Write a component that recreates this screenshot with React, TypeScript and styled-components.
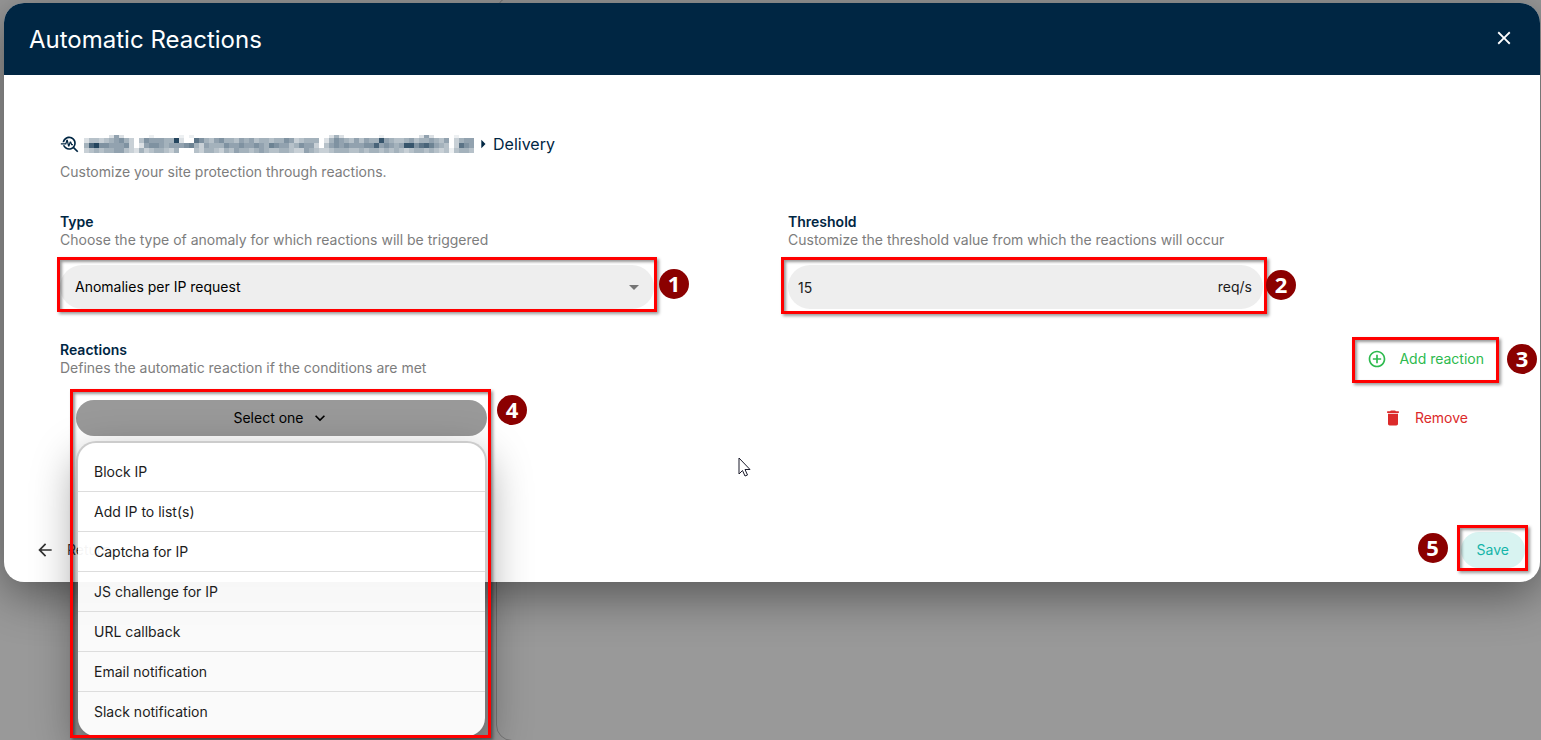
import React from "react";
import styled, { createGlobalStyle, css } from "styled-components";
import {
  MdAddCircleOutline,
  MdArrowBack,
  MdArrowDropDown,
  MdArrowRight,
  MdClose,
  MdDelete,
  MdKeyboardArrowDown,
  MdTroubleshoot,
} from "react-icons/md";

const navy = "#002643";
const grey = "#7d7d7d";

const GlobalStyle = createGlobalStyle`
  *, *::before, *::after { box-sizing: border-box; }
  body {
    margin: 0;
    background: #999;
    color: #1c1c1c;
    font-family: Inter, "Liberation Sans", sans-serif;
    font-size: 14px;
    line-height: 18px;
  }
  button, input, select { font: inherit; color: inherit; }
`;

const Page = styled.div`
  position: relative;
  min-height: 100vh;
  padding: 3px 1px 0 4px;
  overflow: hidden;
  background: #999;
`;

const BackPanel = styled.div`
  position: absolute;
  top: -4px;
  bottom: -1px;
  left: 496px;
  right: -20px;
  border: 1px solid #777;
  border-radius: 16px;
`;

const Dialog = styled.section`
  position: relative;
  background: #fff;
  border-radius: 20px;
  box-shadow: 0 12px 48px rgba(0, 0, 0, 0.46);
`;

const Header = styled.header`
  display: flex;
  align-items: center;
  justify-content: space-between;
  height: 72px;
  padding: 0 25px;
  background: ${navy};
  color: #fff;
  border-radius: 20px 20px 0 0;
`;

const Title = styled.h1`
  margin: 0;
  padding-top: 2px;
  font-size: 24px;
  line-height: 32px;
  font-weight: 400;
`;

const CloseButton = styled.button`
  display: flex;
  padding: 0 0 2px;
  border: 0;
  background: none;
  font-size: 22px;
`;

const Body = styled.div`
  padding: 57px 24px 0 56px;
`;

const Crumbs = styled.nav`
  display: flex;
  align-items: center;
  height: 24px;
  color: ${navy};
  font-size: 16px;
  svg { font-size: 20px; flex: none; }
`;

const CrumbLink = styled.a`
  display: flex;
  margin: 0 -1px 0 4px;
`;

const Hint = styled.p`
  margin: 0;
  color: ${grey};
`;

const Intro = styled(Hint)`
  margin-top: 7px;
`;

const Fields = styled.div`
  display: grid;
  grid-template-columns: 594fr 134fr 475fr 253fr;
  margin-top: 32px;
`;

const Field = styled.div<{ $column: number }>`
  grid-column: ${(p) => p.$column};
`;

const labelStyle = css`
  display: block;
  margin: 0;
  color: ${navy};
  font-size: 14px;
  line-height: 18px;
  font-weight: 600;
`;

const Label = styled.label`
  ${labelStyle}
`;

const SectionTitle = styled.h2`
  ${labelStyle}
`;

const Control = styled.div`
  position: relative;
  display: flex;
  align-items: center;
  height: 44px;
  margin-top: 16px;
  background: #eee;
  border-radius: 22px;
`;

const Select = styled.select`
  appearance: none;
  flex: 1;
  min-width: 0;
  height: 100%;
  padding: 0 15px;
  border: 0;
  background: none;
  color: #000;
`;

const SelectArrow = styled(MdArrowDropDown)`
  margin-right: 8px;
  color: #757575;
  font-size: 24px;
  pointer-events: none;
`;

const Input = styled.input`
  flex: 1;
  min-width: 0;
  height: 100%;
  padding: 0 10px;
  border: 0;
  background: none;
`;

const Unit = styled.span`
  padding-right: 11px;
`;

const Highlight = styled.span<{ $inset: string }>`
  position: absolute;
  inset: ${(p) => p.$inset};
  z-index: 3;
  border: 3px solid #f00;
  box-shadow: 2px 2px 3px rgba(0, 0, 0, 0.4), inset 2px 2px 3px rgba(0, 0, 0, 0.4);
  pointer-events: none;
`;

const Step = styled.span<{ $gap: number; $rise: number; $side?: "left" | "right" }>`
  position: absolute;
  top: calc(50% - 15px - ${(p) => p.$rise}px);
  ${(p) => (p.$side === "left" ? "right" : "left")}: calc(100% + ${(p) => p.$gap}px);
  z-index: 4;
  width: 30px;
  height: 30px;
  border-radius: 50%;
  background: #8b0000;
  color: #fff;
  font-family: "Open Sans", sans-serif;
  font-size: 22px;
  line-height: 28px;
  font-weight: 700;
  text-align: center;
`;

const Reactions = styled.div`
  display: flex;
  justify-content: space-between;
  margin-top: 32px;
`;

const IconButton = styled.button<{ $color: string }>`
  position: relative;
  display: flex;
  align-items: center;
  gap: 12px;
  height: 36px;
  padding: 0;
  border: 0;
  background: none;
  color: ${(p) => p.$color};
  svg { font-size: 20px; }
`;

const AddButton = styled(IconButton)`
  margin-right: 32px;
`;

const RemoveButton = styled(IconButton)`
  margin-right: 48px;
`;

const ReactionRow = styled.div`
  display: flex;
  justify-content: space-between;
  margin-top: 23px;
  padding-left: 16px;
`;

const Dropdown = styled.div`
  position: relative;
  width: 411px;
`;

const DropdownButton = styled.button`
  display: flex;
  align-items: center;
  justify-content: center;
  gap: 6px;
  width: 100%;
  height: 36px;
  padding: 0;
  border: 0;
  border-radius: 18px;
  background: #999;
  color: #000;
  svg { font-size: 20px; }
`;

const Menu = styled.ul`
  position: absolute;
  top: 41px;
  left: 0;
  right: 0;
  z-index: 2;
  margin: 0;
  padding: 9px 0 4px;
  list-style: none;
  border: 2px solid rgba(0, 0, 0, 0.2);
  border-radius: 20px;
  background: rgba(255, 255, 255, 0.95);
  background-clip: padding-box;
  box-shadow: 0 16px 44px rgba(0, 0, 0, 0.38);
`;

const MenuItem = styled.li`
  height: 40px;
  border-bottom: 1px solid #ddd;
  &:last-child { border-bottom-color: transparent; }
`;

const MenuButton = styled.button`
  width: 100%;
  height: 100%;
  padding: 0 16px;
  border: 0;
  background: none;
  text-align: left;
`;

const Footer = styled.footer`
  display: flex;
  align-items: center;
  justify-content: space-between;
  margin-top: 96px;
  padding: 0 15px 14px 31px;
`;

const SaveButton = styled.button`
  position: relative;
  height: 36px;
  padding: 0 16px;
  border: 0;
  border-radius: 18px;
  background: #d8f3f1;
  color: #14b5a9;
`;

const Pointer = styled.svg`
  position: absolute;
  top: 457px;
  left: 738px;
  z-index: 5;
`;

/* Darkness of each cell in the masked host name, 0 (white) to f (navy). */
const mask = [
  "000002620000010000010100000000000000000000000000025200000001000000026200001000",
  "244345675304766655c2009754675546564554557634555025765464655b654456455654603566",
  "5ac7766673026776566678536555766766765876645766304676766677a67656bb79a865403976",
  "345455664325345543500043554354655456544554336543345554454554545434554543414554",
];

function MaskedHost() {
  return (
    <svg width="390" height="18" viewBox="0 0 390 18" role="img" aria-label="Hidden host name" shapeRendering="crispEdges">
      {mask.flatMap((row, y) =>
        row.split("").map((v, x) => (
          <rect
            key={`${y}-${x}`}
            x={x * 5}
            y={y === 0 ? 0 : y * 5 - 2}
            width="5"
            height={y === 0 ? 3 : 5}
            fill={navy}
            opacity={parseInt(v, 16) / 14}
          />
        ))
      )}
    </svg>
  );
}

const reactions = [
  "Block IP",
  "Add IP to list(s)",
  "Captcha for IP",
  "JS challenge for IP",
  "URL callback",
  "Email notification",
  "Slack notification",
];

export default function App() {
  return (
    <Page>
      <GlobalStyle />
      <BackPanel />
      <Dialog role="dialog" aria-labelledby="dialog-title">
        <Header>
          <Title id="dialog-title">Automatic Reactions</Title>
          <CloseButton type="button" aria-label="Close">
            <MdClose />
          </CloseButton>
        </Header>
        <Body>
          <Crumbs aria-label="Breadcrumb">
            <MdTroubleshoot />
            <CrumbLink href="#site">
              <MaskedHost />
            </CrumbLink>
            <MdArrowRight />
            <span>Delivery</span>
          </Crumbs>
          <Intro>Customize your site protection through reactions.</Intro>

          <Fields>
            <Field $column={1}>
              <Label htmlFor="type">Type</Label>
              <Hint>Choose the type of anomaly for which reactions will be triggered</Hint>
              <Control>
                <Select id="type" defaultValue="ip">
                  <option value="ip">Anomalies per IP request</option>
                </Select>
                <SelectArrow />
                <Highlight $inset="-8px -3px -3px -3px" />
                <Step $gap={5} $rise={3}>1</Step>
              </Control>
            </Field>
            <Field $column={3}>
              <Label htmlFor="threshold">Threshold</Label>
              <Hint>Customize the threshold value from which the reactions will occur</Hint>
              <Control>
                <Input id="threshold" defaultValue="15" />
                <Unit>req/s</Unit>
                <Highlight $inset="-8px -4px -5px -7px" />
                <Step $gap={3} $rise={2}>2</Step>
              </Control>
            </Field>
          </Fields>

          <Reactions>
            <div>
              <SectionTitle>Reactions</SectionTitle>
              <Hint>Defines the automatic reaction if the conditions are met</Hint>
            </div>
            <AddButton type="button" $color="#2dba4e">
              <MdAddCircleOutline />
              Add reaction
              <Highlight $inset="-4px -15px -6px -15px" />
              <Step $gap={23} $rise={0}>3</Step>
            </AddButton>
          </Reactions>

          <ReactionRow>
            <Dropdown>
              <DropdownButton type="button" aria-expanded="true">
                Select one
                <MdKeyboardArrowDown />
              </DropdownButton>
              <Menu>
                {reactions.map((name) => (
                  <MenuItem key={name}>
                    <MenuButton type="button">{name}</MenuButton>
                  </MenuItem>
                ))}
              </Menu>
              <Highlight $inset="-11px -4px -302px -6px" />
              <Step $gap={10} $rise={8}>4</Step>
            </Dropdown>
            <RemoveButton type="button" $color="#dc2a2a">
              <MdDelete />
              Remove
            </RemoveButton>
          </ReactionRow>
        </Body>
        <Footer>
          <IconButton type="button" $color="#333">
            <MdArrowBack />
            Return
          </IconButton>
          <SaveButton type="button">
            Save
            <Highlight $inset="-7px -3px -3px -4px" />
            <Step $side="left" $gap={13} $rise={2}>5</Step>
          </SaveButton>
        </Footer>
      </Dialog>
      <Pointer width="13" height="20" viewBox="0 0 13 20" aria-hidden="true">
        <path d="M1 1v16l3.500-3.500 2.500 5.500 2.500-1-2.500-5.500h5z" fill="#fff" stroke="#1a1a2a" strokeWidth="1" />
      </Pointer>
    </Page>
  );
}
